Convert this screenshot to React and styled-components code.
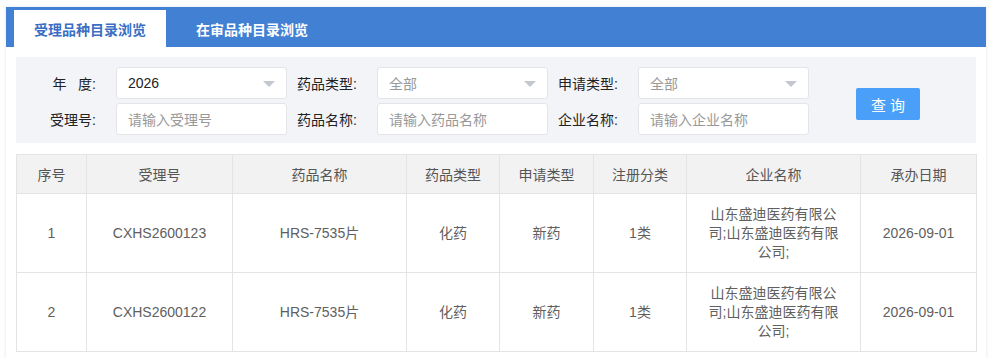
import React from "react";
import styled, { createGlobalStyle } from "styled-components";

const Global = createGlobalStyle`
  html, body { margin: 0; padding: 0; background: #fff; }
  body { font-family: "Liberation Sans", "Noto Sans CJK SC", sans-serif; font-size: 14px; color: #333; }
  * { box-sizing: border-box; }
`;

const Page = styled.div`
  padding: 7px 5px 0 6px;
`;

const Frame = styled.div`
  background: #fff;
  box-shadow: 0 0 3px rgba(120, 140, 170, 0.25);
  min-height: 351px;
`;

const TabBar = styled.div`
  display: flex;
  align-items: flex-end;
  gap: 10px;
  height: 40px;
  padding: 3px 0 0 8px;
  background: #4180d3;
`;

const Tab = styled.div`
  height: 37px;
  padding: 0 20px;
  display: flex;
  align-items: center;
  font-size: 14px;
  font-weight: bold;
  color: ${(p) => (p.$active ? "#3a6fc3" : "#fff")};
  background: ${(p) => (p.$active ? "#fff" : "transparent")};
`;

const Body = styled.div`
  padding: 10px 10px 0 10px;
`;

const Filter = styled.div`
  display: flex;
  align-items: center;
  background: #f3f4f8;
  padding: 10px 10px 8px 10px;
`;

const Grid = styled.div`
  display: grid;
  grid-template-columns: repeat(3, 90px 171px);
  row-gap: 4px;
  align-items: center;
`;

const Label = styled.div`
  text-align: right;
  white-space: nowrap;
  padding-right: 20px;
  font-size: 14px;
  color: #222;
`;

const Field = styled.div`
  position: relative;
  height: 32px;
  display: flex;
  align-items: center;
  padding: 0 11px;
  background: #fff;
  border: 1px solid #e3e5ea;
  border-radius: 3px;
  font-size: 14px;
  color: ${(p) => (p.$placeholder ? "#999" : "#222")};
`;

const Arrow = styled.span`
  position: absolute;
  right: 11px;
  top: 13px;
  width: 0;
  height: 0;
  border-left: 6px solid transparent;
  border-right: 6px solid transparent;
  border-top: 6px solid #c4c7cf;
`;

const QueryButton = styled.button`
  margin-left: 47px;
  margin-top: 6px;
  width: 64px;
  height: 32px;
  border: none;
  border-radius: 2px;
  background: #4aa0f8;
  color: #fff;
  font-family: inherit;
  font-size: 15px;
  letter-spacing: 4px;
  padding: 0 0 0 4px;
`;

const Table = styled.table`
  margin-top: 11px;
  width: 960px;
  table-layout: fixed;
  border-collapse: collapse;
  font-size: 14px;
  color: #606060;
  text-align: center;
`;

const Th = styled.th`
  height: 39px;
  font-weight: normal;
  background: #f2f2f2;
  border: 1px solid #e4e4e4;
  color: #555;
  padding: 0 4px;
`;

const Td = styled.td`
  height: 79px;
  border: 1px solid #e4e4e4;
  padding: 0 20px;
  line-height: 19px;
  color: #606060;
`;

const cols = [70, 146, 174, 93, 94, 93, 174, 116];
const heads = ["序号", "受理号", "药品名称", "药品类型", "申请类型", "注册分类", "企业名称", "承办日期"];
const rows = [
  ["1", "CXHS2600123", "HRS-7535片", "化药", "新药", "1类", "山东盛迪医药有限公司;山东盛迪医药有限公司;", "2026-09-01"],
  ["2", "CXHS2600122", "HRS-7535片", "化药", "新药", "1类", "山东盛迪医药有限公司;山东盛迪医药有限公司;", "2026-09-01"],
];

export default function App() {
  return (
    <>
      <Global />
      <Page>
        <Frame>
          <TabBar>
            <Tab $active>受理品种目录浏览</Tab>
            <Tab>在审品种目录浏览</Tab>
          </TabBar>
          <Body>
            <Filter>
              <Grid>
                <Label>年&nbsp;&nbsp;&nbsp;度:</Label>
                <Field>2026<Arrow /></Field>
                <Label>药品类型:</Label>
                <Field $placeholder>全部<Arrow /></Field>
                <Label>申请类型:</Label>
                <Field $placeholder>全部<Arrow /></Field>
                <Label>受理号:</Label>
                <Field $placeholder>请输入受理号</Field>
                <Label>药品名称:</Label>
                <Field $placeholder>请输入药品名称</Field>
                <Label>企业名称:</Label>
                <Field $placeholder>请输入企业名称</Field>
              </Grid>
              <QueryButton>查询</QueryButton>
            </Filter>
            <Table>
              <colgroup>
                {cols.map((w, i) => (
                  <col key={i} style={{ width: w }} />
                ))}
              </colgroup>
              <thead>
                <tr>
                  {heads.map((h) => (
                    <Th key={h}>{h}</Th>
                  ))}
                </tr>
              </thead>
              <tbody>
                {rows.map((r) => (
                  <tr key={r[0]}>
                    {r.map((c, i) => (
                      <Td key={i}>{c}</Td>
                    ))}
                  </tr>
                ))}
              </tbody>
            </Table>
          </Body>
        </Frame>
      </Page>
    </>
  );
}
